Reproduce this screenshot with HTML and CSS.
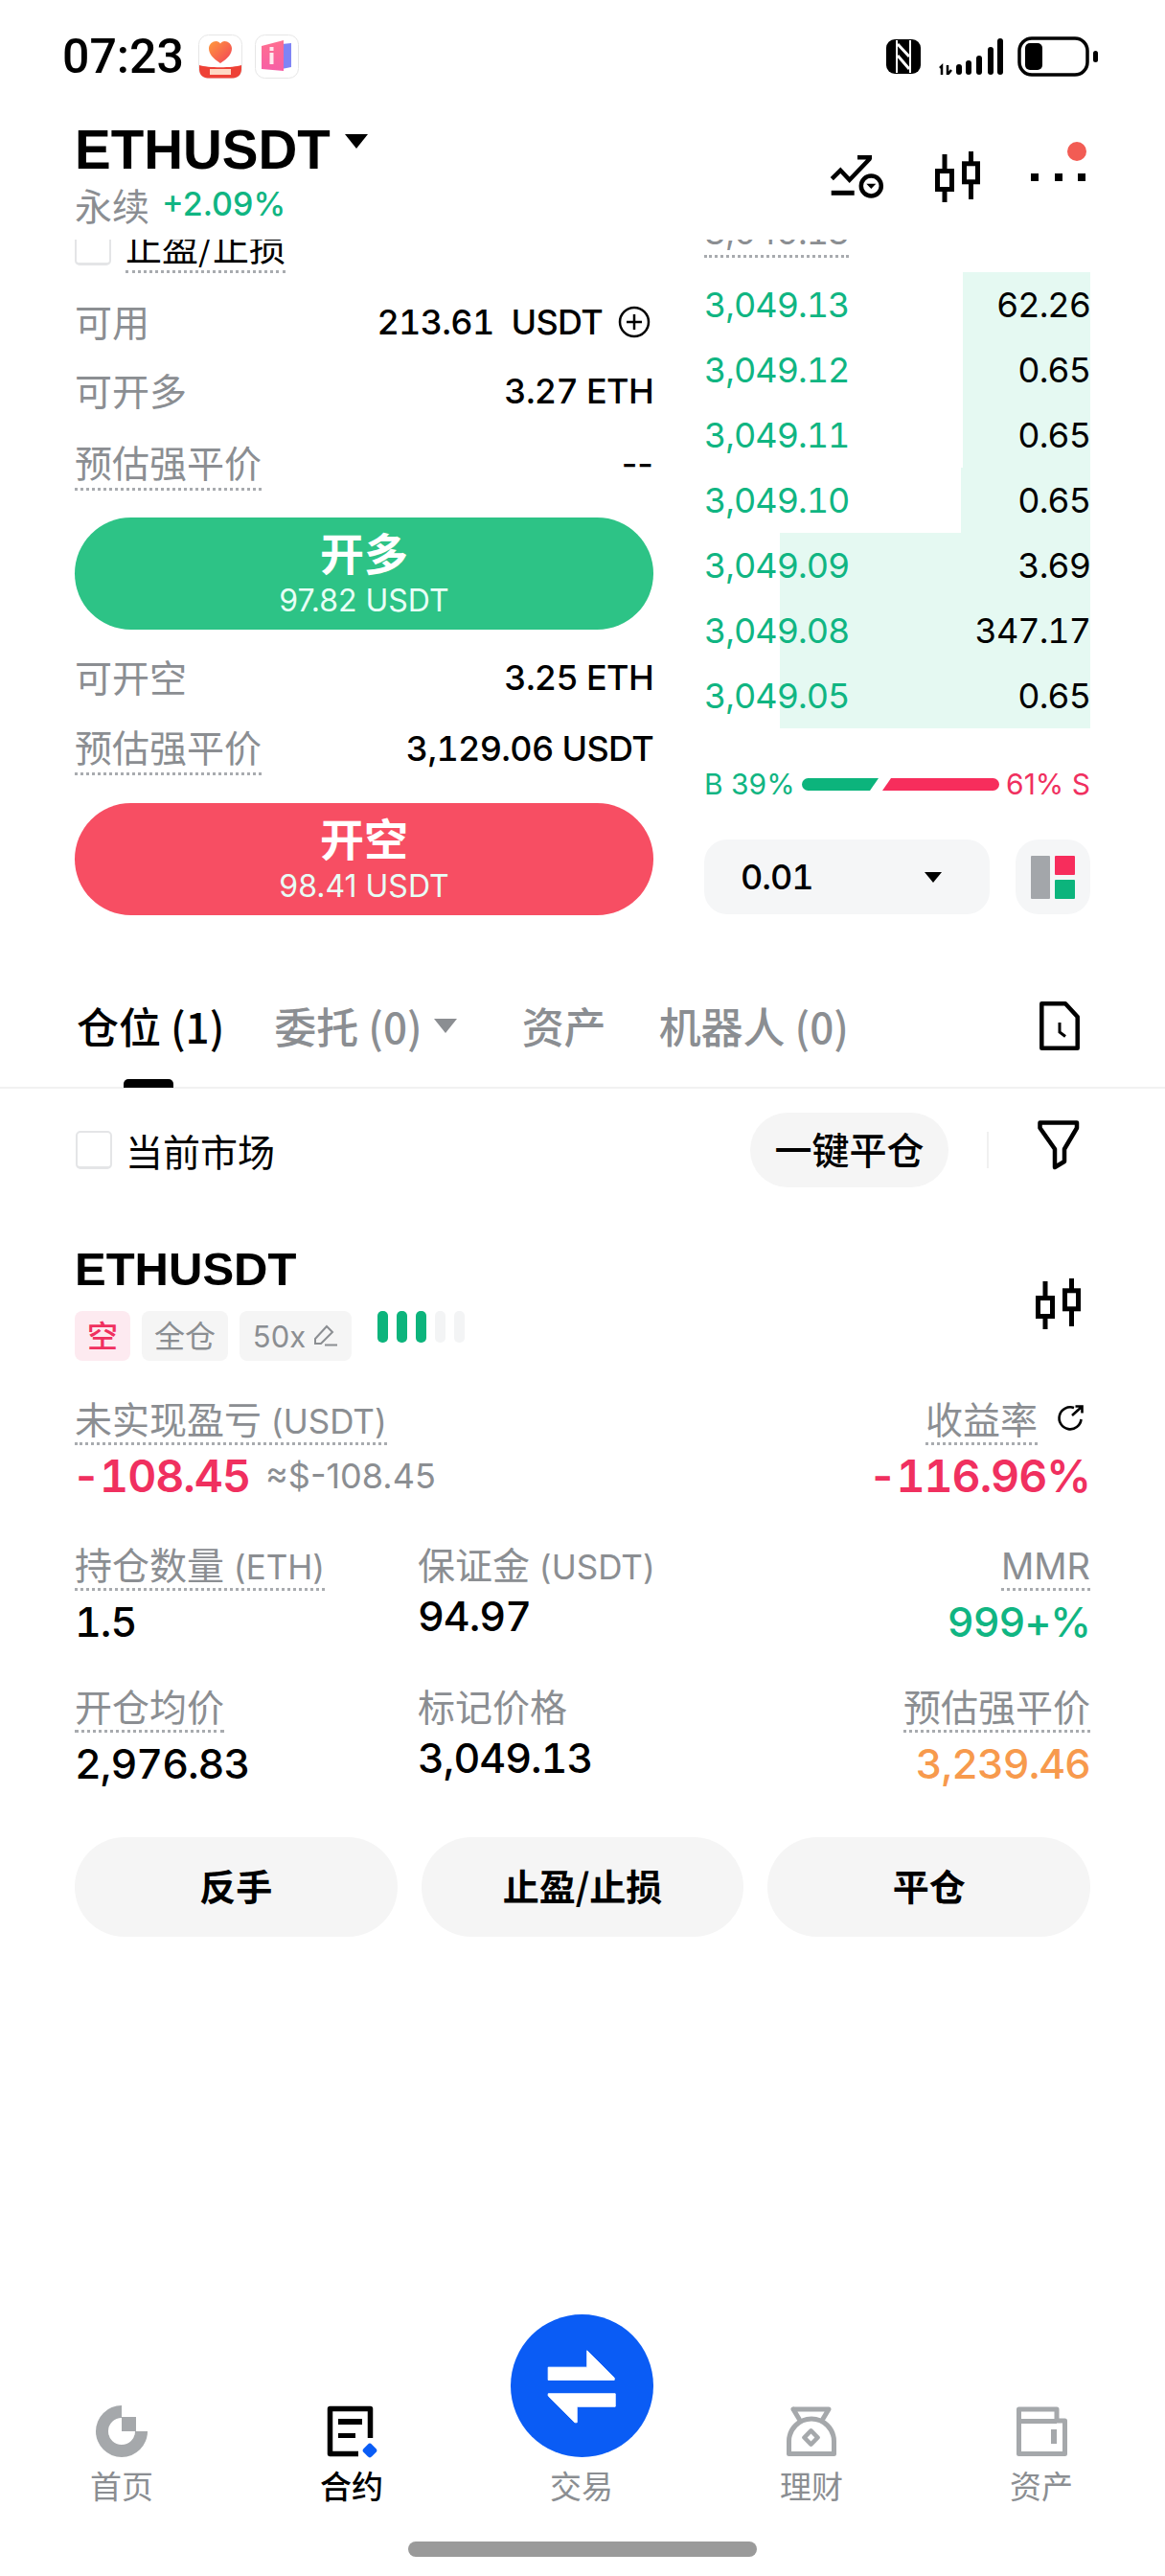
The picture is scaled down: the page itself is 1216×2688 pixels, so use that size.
FILE: index.html
```html
<!DOCTYPE html>
<html lang="zh-CN">
<head>
<meta charset="utf-8">
<title>ETHUSDT</title>
<link rel="stylesheet" href="styles.css">
</head>
<body>
<div class="page">
  <div class="status">
    <div class="status-left">
      <span class="time">07:23</span>
      <svg class="app" viewBox="0 0 46 46"><defs><linearGradient id="h" x1="0" y1="0" x2="1" y2="1"><stop offset="0" stop-color="#ff9a3c"/><stop offset="1" stop-color="#f2405a"/></linearGradient></defs><rect x=".5" y=".5" width="45" height="45" rx="10" fill="#fff" stroke="#e6e6e6"/><path d="M23 30C15 25 11 20 11 14.500C11 10 15 7 18.500 7C20.500 7 22 8 23 9.500C24 8 25.500 7 27.500 7C31 7 35 10 35 14.500C35 20 31 25 23 30Z" fill="url(#h)"/><path d="M1 32C10 35 36 35 45 32V36C45 42 41 45.500 36 45.500H10C5 45.500 1 42 1 36Z" fill="#ee4136"/><rect x="12" y="36" width="22" height="6" fill="#ffd9c4"/></svg>
      <svg class="app" viewBox="0 0 46 46"><defs><linearGradient id="b" x1="0" y1="0" x2="0" y2="1"><stop offset="0" stop-color="#ff6f8f"/><stop offset="1" stop-color="#f75fa6"/></linearGradient></defs><rect x=".5" y=".5" width="45" height="45" rx="10" fill="#fff" stroke="#e6e6e6"/><path d="M28 10L38 9V34L28 36Z" fill="#7f84f5"/><path d="M7 12L30 6V38L7 36Z" fill="url(#b)"/><rect x="15.500" y="19" width="4" height="12" fill="#ffe9ee"/><rect x="15.500" y="13" width="4" height="4" fill="#ffe9ee"/></svg>
    </div>
    <div class="status-right">
      <svg class="nfc" viewBox="0 0 36 36"><rect width="36" height="36" rx="9" fill="#000"/><path d="M11 1V35M25 1V35" stroke="#fff" stroke-width="2" fill="none"/><path d="M12 5L24 18M12 17L24 31" stroke="#fff" stroke-width="3" fill="none"/></svg>
      <svg class="signal" viewBox="0 0 69 38"><path d="M3 31L5 29V38M11 28V38M11 38L15 33" stroke="#000" stroke-width="2.500" fill="none"/><rect x="20" y="27" width="6" height="11" rx="3"/><rect x="30" y="23" width="6" height="15" rx="3"/><rect x="41" y="18" width="6" height="20" rx="3"/><rect x="53" y="9" width="6" height="29" rx="3"/><rect x="63" y="0" width="6" height="38" rx="3"/></svg>
      <svg class="battery" viewBox="0 0 84 42"><rect x="2" y="2" width="71" height="38" rx="13" fill="none" stroke="#000" stroke-width="3.500"/><rect x="8" y="7" width="18" height="28" rx="5"/><rect x="79" y="15" width="5" height="12" rx="2.500"/></svg>
    </div>
  </div>

  <header class="head">
    <div>
      <div class="symbol"><span>ETHUSDT</span><i class="caret-big"></i></div>
      <div class="sub"><span class="sub-label">永续</span><span class="sub-pct">+2.09%</span></div>
    </div>
    <div class="actions">
      <svg class="ic-trend" viewBox="0 0 58 50" fill="none" stroke="#000" stroke-width="4.500"><path d="M2.300 26.700L11.300 17.700L20.700 27.700L42 5.500M29 4.300H44"/><path d="M1.700 41.300H25.700" stroke-width="5"/><circle cx="43.300" cy="34" r="10.500"/><path d="M38.300 31.700H48.300L43.300 37Z" fill="#000" stroke="none"/></svg>
      <svg class="ic-candle" viewBox="0 0 52 58"><use href="#candle"/></svg>
      <div class="more"><i></i><i></i><i></i><b class="badge"></b></div>
    </div>
  </header>

  <section class="trade">
    <div class="form">
      <div class="tpsl"><i class="check"></i><span class="dot dark">止盈/止损</span></div>
      <div class="row"><span class="lbl">可用</span><span class="val">213.61&nbsp; USDT<svg class="plus" viewBox="0 0 34 34" fill="none" stroke="#000" stroke-width="2.500"><circle cx="17" cy="17" r="15"/><path d="M9 17H25M17 9V25"/></svg></span></div>
      <div class="row"><span class="lbl">可开多</span><span class="val">3.27 ETH</span></div>
      <div class="row row-liq"><span class="lbl dot u">预估强平价</span><span class="val val-dash">--</span></div>
      <button class="order long"><span class="order-t">开多</span><span class="order-s">97.82 USDT</span></button>
      <div class="row row-short"><span class="lbl">可开空</span><span class="val">3.25 ETH</span></div>
      <div class="row row-liq2"><span class="lbl dot u">预估强平价</span><span class="val">3,129.06 USDT</span></div>
      <button class="order short"><span class="order-t">开空</span><span class="order-s">98.41 USDT</span></button>
    </div>
    <div class="book">
      <div class="book-cut"><span class="book-mid">3,049.13</span></div>
      <div class="level"><i class="depth" style="width:33%"></i><span class="px">3,049.13</span><span class="qty">62.26</span></div>
      <div class="level"><i class="depth" style="width:33%"></i><span class="px">3,049.12</span><span class="qty">0.65</span></div>
      <div class="level"><i class="depth" style="width:33%"></i><span class="px">3,049.11</span><span class="qty">0.65</span></div>
      <div class="level"><i class="depth" style="width:33.400%"></i><span class="px">3,049.10</span><span class="qty">0.65</span></div>
      <div class="level"><i class="depth" style="width:80.400%"></i><span class="px">3,049.09</span><span class="qty">3.69</span></div>
      <div class="level"><i class="depth" style="width:80.400%"></i><span class="px">3,049.08</span><span class="qty">347.17</span></div>
      <div class="level"><i class="depth" style="width:80.400%"></i><span class="px">3,049.05</span><span class="qty">0.65</span></div>
      <div class="ratio">
        <span class="buy">B 39%</span>
        <svg class="ratio-bar" viewBox="0 0 206 13"><path d="M6.500 0H80L71 13H6.500A6.500 6.500 0 0 1 6.500 0Z" fill="#0cb47c"/><path d="M93 0H199.500A6.500 6.500 0 0 1 199.500 13H84Z" fill="#f72d5c"/></svg>
        <span class="sell">61% S</span>
      </div>
      <div class="book-tools">
        <div class="step"><span>0.01</span><i class="caret-sm"></i></div>
        <div class="layout"><svg viewBox="0 0 46 46"><rect width="20" height="45" rx="1" fill="#a3a6aa"/><rect x="25" width="21" height="20" rx="1" fill="#f72d5c"/><rect x="25" y="25" width="21" height="20" rx="1" fill="#0cb47c"/></svg></div>
      </div>
    </div>
  </section>

  <nav class="tabs">
    <span class="tab tab-first on">仓位 (1)<i class="tab-bar"></i></span>
    <span class="tab tab-caret">委托 (0)<i class="caret-tab"></i></span>
    <span class="tab">资产</span>
    <span class="tab">机器人 (0)</span>
    <svg class="ic-history" viewBox="0 0 42 51" fill="none" stroke="#000" stroke-width="4.500"><path d="M2.300 2.300H27L39.700 16V48.700H2.300Z" stroke-linejoin="round"/><path d="M21 22V32L27 36.500" stroke-width="3"/></svg>
  </nav>

  <div class="filter">
    <i class="check"></i><span class="filter-t">当前市场</span>
    <span class="close-all">一键平仓</span>
    <i class="vline"></i>
    <svg class="ic-filter" viewBox="0 0 44 52" fill="none" stroke="#000" stroke-width="4.500" stroke-linejoin="round"><path d="M2.500 2.500H41V8L28 30V43L18 49V30L2.500 8Z"/></svg>
  </div>

  <article class="card">
    <div class="card-head">
      <div>
        <div class="card-sym">ETHUSDT</div>
        <div class="tags">
          <span class="tag tag-red">空</span>
          <span class="tag">全仓</span>
          <span class="tag tag-lev">50x<svg viewBox="0 0 26 24" fill="none" stroke="#8b8e92" stroke-width="2"><path d="M2 15L14 2L20 8L8 20H2ZM12 21.500H25"/></svg></span>
          <span class="bars"><i class="on"></i><i class="on"></i><i class="on"></i><i></i><i></i></span>
        </div>
      </div>
      <svg class="ic-candle2" viewBox="0 0 52 58"><defs><g id="candle" fill="none" stroke="#000" stroke-width="5"><rect x="3.500" y="23.500" width="15" height="19"/><path d="M11 6V23M11 43V56"/><rect x="31.500" y="15.800" width="14" height="19"/><path d="M38.500 3V16M38.500 35V53"/></g></defs><use href="#candle"/></svg>
    </div>

    <div class="pnl">
      <div class="stack">
        <span class="mlabel dot">未实现盈亏<span class="lat"> (USDT)</span></span>
        <div class="pnl-val"><span class="pnl-big">-108.45</span><span class="pnl-usd">≈$-108.45</span></div>
      </div>
      <div class="stack right">
        <div class="roe-line"><span class="mlabel dot">收益率</span><svg class="ic-share" viewBox="0 0 30 30" fill="none" stroke="#000" stroke-width="2.600"><path d="M18 5A11.500 11.500 0 1 0 25.500 17"/><path d="M16 13L26 4M19.500 3.500H26.500V10.500"/></svg></div>
        <div class="pnl-big roe">-116.96%</div>
      </div>
    </div>

    <div class="grid">
      <div class="cell stack"><span class="mlabel dot">持仓数量<span class="lat"> (ETH)</span></span><div class="mval">1.5</div></div>
      <div class="cell stack"><span class="mlabel">保证金<span class="lat"> (USDT)</span></span><div class="mval near">94.97</div></div>
      <div class="cell stack right"><span class="mlabel dot"><span class="lat lat-big">MMR</span></span><div class="mval green">999+%</div></div>
      <div class="cell stack"><span class="mlabel dot">开仓均价</span><div class="mval">2,976.83</div></div>
      <div class="cell stack"><span class="mlabel">标记价格</span><div class="mval near">3,049.13</div></div>
      <div class="cell stack right"><span class="mlabel dot">预估强平价</span><div class="mval orange">3,239.46</div></div>
    </div>

    <div class="card-btns">
      <button class="cbtn">反手</button>
      <button class="cbtn">止盈/止损</button>
      <button class="cbtn">平仓</button>
    </div>
  </article>

  <footer class="nav">
    <div class="nav-item">
      <svg class="nav-ic" viewBox="0 0 54 54" fill="#a5a8ab"><path d="M27 0A27 27 0 1 0 54 27H41A14 14 0 1 1 27 13Z"/><rect x="27" y="12" width="15" height="15"/></svg>
      <span class="nav-t">首页</span>
    </div>
    <div class="nav-item active">
      <svg class="nav-ic" viewBox="0 0 52 54"><path d="M45.500 34V3.500H3.500V50.500H33" fill="none" stroke="#000" stroke-width="5.500" stroke-linejoin="round"/><rect x="12" y="14" width="25" height="6"/><rect x="12" y="29" width="18" height="5"/><rect x="39" y="41" width="12" height="12" rx="3" transform="rotate(45 45 47)" fill="#0a5cf5"/></svg>
      <span class="nav-t">合约</span>
    </div>
    <div class="nav-item">
      <svg class="nav-main" viewBox="0 0 149 149"><circle cx="74.500" cy="74.500" r="74.500" fill="#0a5cf5"/><path d="M39.200 55.200H79.800V37.800L108.200 66.200V68.500H39.200ZM39.200 82.800H109.200V96.200H69.200V112.800H67L39.200 85Z" fill="#fff" stroke="#fff" stroke-width="1" stroke-linejoin="round"/></svg>
      <span class="nav-t">交易</span>
    </div>
    <div class="nav-item">
      <svg class="nav-ic" viewBox="0 0 52 54" fill="none" stroke="#a5a8ab" stroke-width="5" stroke-linejoin="round" stroke-linecap="round"><path d="M7 4H44L38 14M7 4L13 14"/><path d="M2.500 50.500V37.500A23.500 23.500 0 0 1 49.500 37.500V50.500Z"/><rect x="20.500" y="28.500" width="10" height="10" transform="rotate(45 25.500 33.500)" stroke-width="4.500"/></svg>
      <span class="nav-t">理财</span>
    </div>
    <div class="nav-item">
      <svg class="nav-ic" viewBox="0 0 54 54" fill="none" stroke="#a5a8ab" stroke-width="5" stroke-linejoin="round"><path d="M3.500 50.500V4H43V16H51.500V50.500ZM3.500 16.500H43"/><path d="M40 25V40" stroke-width="6"/></svg>
      <span class="nav-t">资产</span>
    </div>
  </footer>
  <div class="home-bar"></div>
</div>
</body>
</html>
```
FILE: styles.css
```css
* { box-sizing: border-box; }
html, body { margin: 0; padding: 0; background: #fff; }
body { font-family: Inter, "Noto Sans CJK SC", sans-serif; color: #000; }
i { display: block; }
.page { width: 1216px; height: 2688px; display: flex; flex-direction: column; overflow: hidden; }

/* status bar */
.status { height: 118px; flex: none; display: flex; justify-content: space-between; align-items: center; padding: 0 70px 0 65px; }
.status-left, .status-right { display: flex; align-items: center; }
.time { font: 500 50px/50px Roboto, sans-serif; margin-right: 15px; }
.app { width: 46px; height: 46px; margin-right: 13px; }
.nfc { width: 36px; height: 36px; margin-right: 17px; }
.signal { width: 69px; height: 38px; margin-right: 15px; }
.battery { width: 84px; height: 42px; }

/* header */
.head { height: 132px; flex: none; display: flex; justify-content: space-between; padding: 11px 83px 0 78px; }
.symbol { display: flex; font: 700 56.500px/56px "Liberation Sans", sans-serif; }
.caret-big { width: 0; height: 0; margin: 11px 0 0 15px; border-style: solid; border-width: 15px 12px 0; border-color: #000 transparent transparent; }
.sub { display: flex; align-items: center; height: 44px; margin-top: 6px; }
.sub-label { font: 400 39px/44px "Noto Sans CJK SC", sans-serif; color: #8b8e92; margin-right: 13px; }
.sub-pct { font: 500 34px/44px Inter, sans-serif; color: #10b582; }
.actions { display: flex; align-items: flex-start; }
.ic-trend { width: 58px; height: 50px; margin: 31px 51px 0 0; }
.ic-candle { width: 52px; height: 58px; margin: 26px 49px 0 0; }
.more { position: relative; width: 57px; height: 8px; margin-top: 52px; display: flex; justify-content: space-between; }
.more i { width: 8px; height: 8px; background: #000; }
.badge { position: absolute; right: -1px; top: -33px; width: 20px; height: 20px; border-radius: 50%; background: #f25c54; }

/* trade */
.trade { height: 710px; flex: none; overflow: hidden; display: flex; padding-left: 78px; }
.form { width: 604px; flex: none; margin-right: 53px; }
.tpsl { display: flex; margin-top: -14px; height: 64px; }
.check { width: 38px; height: 40px; flex: none; border: 2px solid #e4e5e7; border-bottom-width: 3px; border-radius: 5px; }
.tpsl .check { margin: 1px 15px 0 0; }
.dot { border-bottom: 3px dotted #a8abaf; }
.tpsl .dot { font: 400 38px/40px "Noto Sans CJK SC", sans-serif; height: 49px; padding-bottom: 4px; }
.row { display: flex; justify-content: space-between; align-items: center; height: 72px; }
.lbl { font: 400 39px/38px "Noto Sans CJK SC", sans-serif; color: #8b8e92; margin-bottom: 5px; }
.lbl.u { padding-bottom: 9px; margin: 5px 0 0; }
.val { display: flex; align-items: center; font: 500 36px/44px Inter, sans-serif; letter-spacing: -0.7px; }
.plus { width: 34px; height: 34px; margin-left: 16px; margin-right: 3px; }
.row-liq { margin-top: 4px; margin-bottom: 20px; }
.row-short { margin-top: 14px; }
.row-liq2 { margin-top: 2px; margin-bottom: 21px; }
.order { display: flex; flex-direction: column; align-items: center; width: 604px; height: 117px; border: 0; border-radius: 59px; color: #fff; padding: 11px 0 0; }
.long { background: #2dc386; }
.short { background: #f74e63; }
.order-t { font: 700 46px/48px "Noto Sans CJK SC", sans-serif; }
.order-s { font: 400 32px/38px Inter, sans-serif; margin-top: 9px; color: #e8fff6; }
.book { width: 403px; flex: none; }
.book-cut { height: 34px; overflow: hidden; }
.book-mid { display: block; width: fit-content; margin-top: -30px; font: 400 36px/44px Inter, sans-serif; letter-spacing: -1px; color: #8b8e92; border-bottom: 3px dotted #a8abaf; padding-bottom: 2px; }
.level { position: relative; display: flex; justify-content: space-between; align-items: center; height: 68px; }
.depth { position: absolute; right: 0; top: 0; bottom: 0; background: #e5f9f2; }
.px, .qty { position: relative; font: 400 36px/44px Inter, sans-serif; letter-spacing: -1px; }
.px { color: #10b582; }
.ratio { display: flex; align-items: center; justify-content: space-between; height: 30px; margin-top: 43px; font: 400 30px/30px Inter, sans-serif; }
.buy { color: #10b582; }
.sell { color: #f0305f; }
.ratio-bar { width: 206px; height: 13px; }
.book-tools { display: flex; justify-content: space-between; margin-top: 43px; }
.step { width: 298px; height: 78px; border-radius: 24px; background: #f5f6f7; display: flex; align-items: center; justify-content: space-between; padding: 0 50px 0 38px; font: 500 36px/44px Inter, sans-serif; letter-spacing: -1px; }
.caret-sm { width: 0; height: 0; border-style: solid; border-width: 11px 9px 0; border-color: #000 transparent transparent; }
.layout { width: 78px; height: 78px; border-radius: 24px; background: #f5f6f7; padding: 17px 16px; }
.layout svg { display: block; width: 46px; height: 46px; }

/* tabs */
.tabs { height: 176px; flex: none; display: flex; align-items: flex-start; padding: 80px 89px 0 80px; border-bottom: 2px solid #f1f1f1; }
.tab { position: relative; display: flex; align-items: center; height: 60px; margin-right: 55px; font: 500 44px/60px "Noto Sans CJK SC", Inter, sans-serif; color: #8b8e92; }
.tab.on { color: #000; }
.tab-first { margin-right: 52px; }
.tab-caret { margin-right: 104px; }
.tab-bar { position: absolute; left: 49px; top: 86px; width: 52px; height: 9px; border-radius: 5px 5px 0 0; background: #000; }
.caret-tab { position: absolute; right: -36px; top: 23px; width: 0; height: 0; border-style: solid; border-width: 15px 12px 0; border-color: #8b8e92 transparent transparent; }
.ic-history { width: 42px; height: 51px; margin-left: auto; margin-top: 5px; }

/* filter */
.filter { height: 128px; flex: none; display: flex; align-items: center; padding: 0 89px 0 79px; }
.filter .check { margin-right: 14px; }
.filter-t { font: 400 39px/40px "Noto Sans CJK SC", sans-serif; }
.close-all { margin-left: auto; width: 207px; height: 78px; border-radius: 39px; background: #f5f5f5; font: 500 39px/75px "Noto Sans CJK SC", sans-serif; text-align: center; }
.vline { width: 2px; height: 38px; margin: 0 51px 0 40px; background: #f0f0f0; }
.ic-filter { width: 44px; height: 52px; margin-top: -10px; }

/* position card */
.card { flex: none; padding: 36px 78px 0; }
.card-head { display: flex; justify-content: space-between; align-items: center; }
.card-sym { font: 700 49px/48px "Liberation Sans", sans-serif; }
.tags { display: flex; margin-top: 20px; }
.tag { display: flex; align-items: center; justify-content: center; height: 52px; padding: 0 13px 3px; border-radius: 8px; background: #f5f5f5; font: 400 32px/49px "Noto Sans CJK SC", Inter, sans-serif; color: #8b8e92; margin-right: 12px; }
.tag-red { background: #fdeaf0; color: #f0305f; width: 58px; padding: 0 0 3px; font-weight: 500; }
.tag-lev { width: 117px; padding: 0; font: 400 31px/49px Inter, sans-serif; }
.tag-lev svg { width: 26px; height: 24px; margin-left: 8px; }
.bars { display: flex; margin-left: 15px; }
.bars i { width: 11px; height: 33px; border-radius: 5px; background: #f3f4f5; margin-right: 9px; }
.bars i.on { background: #0cb47c; }
.ic-candle2 { width: 52px; height: 58px; margin-right: 6px; }
.stack { display: flex; flex-direction: column; align-items: flex-start; }
.stack.right { align-items: flex-end; }
.pnl { display: flex; justify-content: space-between; margin-top: 42px; }
.mlabel { display: block; height: 40px; margin-top: -2px; font: 400 39px/38px "Noto Sans CJK SC", sans-serif; color: #8b8e92; }
.lat { font: 400 35px/38px Inter, sans-serif; }
.lat-big { font-size: 38px; }
.mlabel.dot { height: 48px; padding: 0 0 7px; }
.pnl-val { display: flex; align-items: center; margin: 6px 0 0 -3px; }
.pnl-big { font: 600 46.500px/52px Inter, sans-serif; letter-spacing: -1px; color: #f0305f; }
.roe { margin-top: 6px; }
.pnl-usd { font: 400 36px/52px Inter, sans-serif; color: #8b8e92; margin-left: 16px; }
.roe-line { display: flex; justify-content: flex-end; align-items: flex-start; }
.ic-share { width: 30px; height: 30px; margin: 2px 5px 0 20px; }
.grid { display: grid; grid-template-columns: 358px 1fr auto; row-gap: 46px; margin-top: 48px; }
.cell { height: 102px; }
.mval { font: 500 43px/48px Inter, sans-serif; letter-spacing: -1px; margin-top: 8px; }
.mval.near { margin-top: 10px; }
.green { color: #10b582; }
.orange { color: #f79a4d; }
.card-btns { display: grid; grid-template-columns: repeat(3, 1fr); gap: 25px; margin-top: 53px; }
.cbtn { height: 104px; border: 0; border-radius: 52px; background: #f5f5f5; padding: 0 0 5px; font: 700 38px/44px "Noto Sans CJK SC", sans-serif; color: #000; }

/* bottom nav */
.nav { margin-top: auto; display: grid; grid-template-columns: repeat(5, 240px); padding: 0 7px; align-items: end; }
.nav-item { display: flex; flex-direction: column; align-items: center; }
.nav-ic { width: 54px; height: 54px; overflow: visible; }
.nav-main { width: 149px; height: 149px; }
.nav-t { margin-top: 13px; font: 400 33px/32px "Noto Sans CJK SC", sans-serif; color: #8b8e92; }
.active .nav-t { color: #000; font-weight: 500; }
.home-bar { flex: none; width: 364px; height: 16px; margin: 43px auto 20px; border-radius: 8px; background: #9a9a9a; }

/* tabular figures: declared last, since the font shorthand above resets them */
.val, .px, .qty, .book-mid, .step, .pnl-big, .mval { font-variant-numeric: tabular-nums; }
.val-dash { font-variant-numeric: normal; letter-spacing: 0; }
```
